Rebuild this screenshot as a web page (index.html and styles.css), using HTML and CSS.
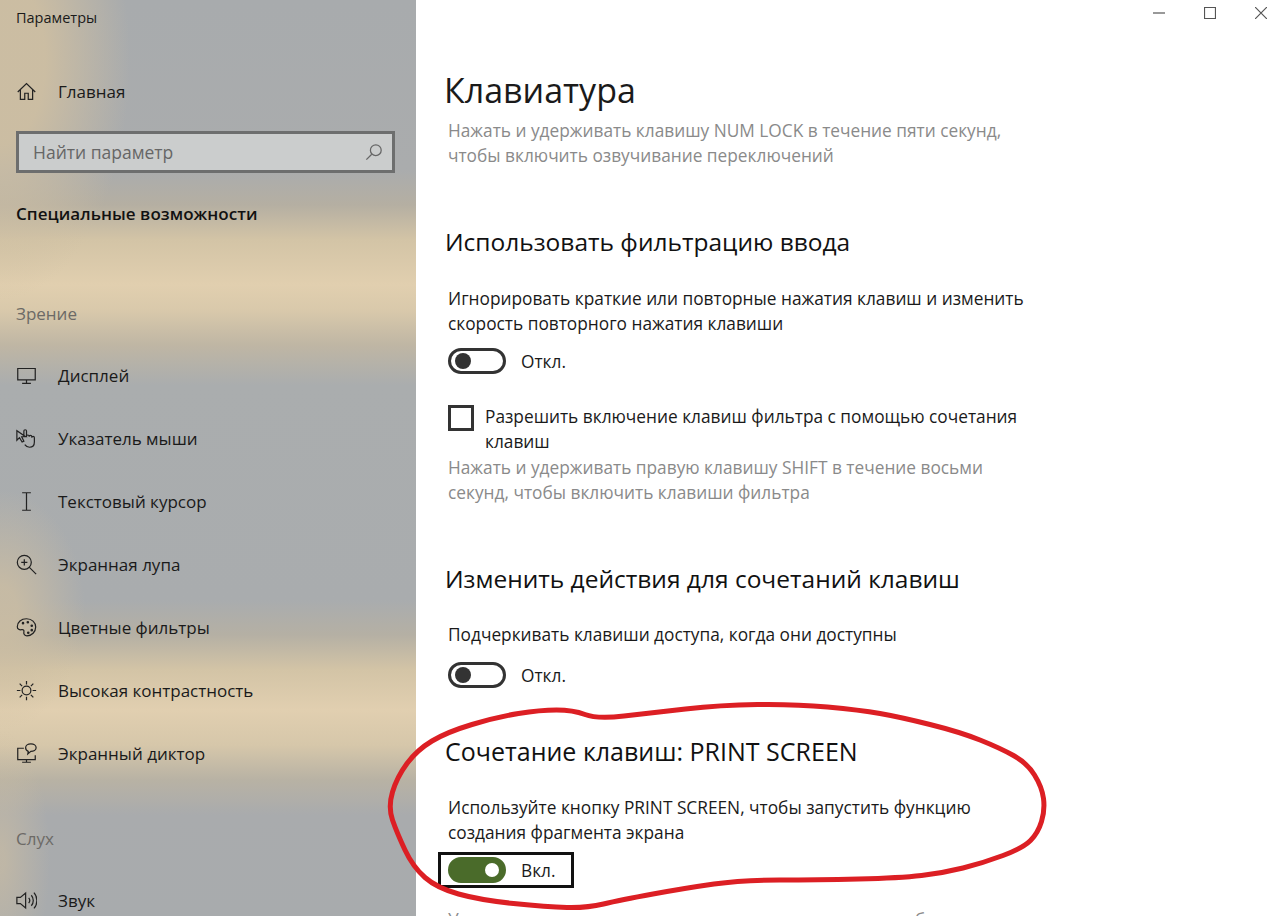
FILE: index.html
```html
<!DOCTYPE html>
<html lang="ru">
<head>
  <meta charset="UTF-8" />
  <title>Параметры</title>
  <link rel="stylesheet" href="styles.css">
</head>
<body>
  <div class="window">
    <aside class="sidebar">
      <div class="app-title">Параметры</div>
      <a class="nav-item home">
        <svg class="nav-icon" viewBox="0 0 24 24"><path d="M2 12.500 12 3l10 9.500M5 10v11h5v-7h4v7h5V10"/></svg>
        <span>Главная</span>
      </a>
      <div class="search">
        <span>Найти параметр</span>
        <svg class="search-icon" viewBox="0 0 20 20"><circle cx="12" cy="8" r="6"/><path d="M7.500 12.500 1.500 18.500"/></svg>
      </div>
      <div class="sidebar-heading">Специальные возможности</div>

      <div class="group-label first">Зрение</div>
      <a class="nav-item">
        <svg class="nav-icon" viewBox="0 0 24 24"><path d="M2 4h20v13H2zM12 17v4M7 21h10"/></svg>
        <span>Дисплей</span>
      </a>
      <a class="nav-item">
        <svg class="nav-icon" viewBox="0 0 24 24"><path d="M1 3v11l3-3 3 5 2-1-2.500-5H11zM9 10V3.500a1.500 1.500 0 0 1 3 0V10M12 9.500a1.500 1.500 0 0 1 3 0M15 10a1.500 1.500 0 0 1 3 0M18 11a1.500 1.500 0 0 1 3 0v5c0 4-2.500 6-5.500 6-2.500 0-4-1-5.500-3"/></svg>
        <span>Указатель мыши</span>
      </a>
      <a class="nav-item">
        <svg class="nav-icon" viewBox="0 0 24 24"><path d="M7 2h10M12 2v20M7 22h10"/></svg>
        <span>Текстовый курсор</span>
      </a>
      <a class="nav-item">
        <svg class="nav-icon" viewBox="0 0 24 24"><circle cx="9.500" cy="9.500" r="8"/><path d="M15 15l8 8M9.500 6v7M6 9.500h7"/></svg>
        <span>Экранная лупа</span>
      </a>
      <a class="nav-item">
        <svg class="nav-icon" viewBox="0 0 24 24"><path d="M12 2C6 2 1.500 6 1.500 11c0 3 2.500 4 5 3.500 2-.4 3 .8 2.500 2.500-.6 2.500 1 4.500 3.500 4.500 5.500 0 10-4.500 10-10S18 2 12 2z"/><circle cx="8" cy="7" r=".8"/><circle cx="13.500" cy="6" r=".8"/><circle cx="18" cy="10" r=".8"/><circle cx="18" cy="15" r=".8"/><circle cx="14" cy="18" r=".8"/></svg>
        <span>Цветные фильтры</span>
      </a>
      <a class="nav-item">
        <svg class="nav-icon" viewBox="0 0 24 24"><circle cx="12" cy="12" r="5"/><path d="M12 1v4M12 19v4M1 12h4M19 12h4M4.200 4.200 7 7M17 17l2.800 2.800M4.200 19.800 7 17M17 7l2.800-2.800"/></svg>
        <span>Высокая контрастность</span>
      </a>
      <a class="nav-item">
        <svg class="nav-icon" viewBox="0 0 24 24"><path d="M9 6H2v13h20v-5M12 19v3M7 22h10"/><path d="M17 1c-3.500 0-6 2-6 4.500S12.500 9 14 9.500l-.5 3 3.500-3c3 0 6-1.500 6-4S20.500 1 17 1z"/></svg>
        <span>Экранный диктор</span>
      </a>

      <div class="group-label">Слух</div>
      <a class="nav-item">
        <svg class="nav-icon" viewBox="0 0 24 24"><path d="M1 8.500v7h4l6 5V3.500l-6 5zM14.500 9c1.500 1.800 1.500 4.200 0 6M17.500 6c3 3.500 3 8.500 0 12M20.500 3c4.500 5 4.500 13 0 18"/></svg>
        <span>Звук</span>
      </a>
    </aside>

    <main class="content">
      <div class="window-controls">
        <svg viewBox="0 0 12 12"><path d="M0 6h12"/></svg>
        <svg viewBox="0 0 12 12"><path d="M.5.500h11v11H.5z"/></svg>
        <svg viewBox="0 0 12 12"><path d="M0 0l12 12M12 0 0 12"/></svg>
      </div>

      <h1>Клавиатура</h1>
      <p class="muted intro">Нажать и удерживать клавишу NUM LOCK в течение пяти секунд,<br>чтобы включить озвучивание переключений</p>

      <h2 class="filter-title">Использовать фильтрацию ввода</h2>
      <p>Игнорировать краткие или повторные нажатия клавиш и изменить<br>скорость повторного нажатия клавиши</p>
      <div class="toggle-row">
        <span class="toggle"></span>
        <span>Откл.</span>
      </div>
      <div class="check-row">
        <span class="checkbox"></span>
        <span>Разрешить включение клавиш фильтра с помощью сочетания<br>клавиш</span>
      </div>
      <p class="muted check-hint">Нажать и удерживать правую клавишу SHIFT в течение восьми<br>секунд, чтобы включить клавиши фильтра</p>

      <h2 class="shortcut-title">Изменить действия для сочетаний клавиш</h2>
      <p>Подчеркивать клавиши доступа, когда они доступны</p>
      <div class="toggle-row access">
        <span class="toggle"></span>
        <span>Откл.</span>
      </div>

      <h2 class="print-title">Сочетание клавиш: PRINT SCREEN</h2>
      <p>Используйте кнопку PRINT SCREEN, чтобы запустить функцию<br>создания фрагмента экрана</p>
      <div class="toggle-row focused">
        <span class="toggle on"></span>
        <span>Вкл.</span>
      </div>
      <p class="muted tail">Учтите, что на применение этих настроек может потребоваться время</p>
    </main>

    <!-- red marker scribble over the screenshot -->
    <svg class="scribble" viewBox="0 0 1280 916">
      <path d="M585 714.500Q573 710 556.500 710Q540 710 518.500 713.500Q497 717 472 724.500Q447 732 432 741Q417 750 407 763.500Q397 777 392.500 792Q388 807 392.500 820Q397 833 405 850Q413 867 425 877.500Q437 888 458.500 894Q480 900 513.500 903.500Q547 907 567 907.500Q587 908 603.500 904Q620 900 653 894Q686 888 714 884Q742 880 779.500 880Q817 880 858.500 879Q900 878 921.500 875.500Q943 873 963 868Q983 863 1003 855.500Q1023 848 1030.500 840.500Q1038 833 1041.500 821.500Q1045 810 1043.500 798.500Q1042 787 1034.500 775Q1027 763 1013.500 755.500Q1000 748 980 740Q960 732 930 724.500Q900 717 880 713.500Q860 710 827.500 707Q795 704 757.500 704.500Q720 705 685.500 709Q651 713 624 716Q597 719 585 714.500"/>
    </svg>
  </div>
</body>
</html>
```

FILE: styles.css
```css
html, body {
  margin: 0;
  padding: 0;
  height: 100%;
  overflow: hidden;
}
body {
  font-family: "Open Sans", "Noto Sans", sans-serif;
  color: #1a1a1a;
  background: #fff;
}
.window {
  position: relative;
  display: flex;
  height: 916px;
  overflow: hidden;
}

/* sidebar: blurred wallpaper look */
.sidebar {
  width: 416px;
  flex: none;
  box-sizing: border-box;
  padding: 8px 0 0 16px;
  font-size: 17px;
  background:
    radial-gradient(ellipse 130px 240px at 0 60px, rgba(205,190,162,.95) 35%, rgba(205,190,162,0) 100%),
    radial-gradient(ellipse 85px 120px at 0 610px, rgba(205,190,162,.8) 20%, rgba(205,190,162,0) 100%),
    radial-gradient(ellipse 50px 130px at 0 860px, rgba(205,190,162,.6) 10%, rgba(205,190,162,0) 100%),
    linear-gradient(180deg,
      #a8abad 0, #aaacad 170px, #b5afa2 205px, #d3c4a6 240px, #e1cfaf 285px, #d9c9ab 310px, #bfb6a4 345px,
      #aaadae 385px, #a9acae 600px, #b5b0a4 635px, #d3c4a6 670px, #e1cfb0 710px, #d6c7aa 745px, #b8b2a4 780px,
      #a9abad 815px, #a8abad 916px);
}
.app-title {
  font-size: 14.500px;
  line-height: 20px;
}
.nav-item {
  display: flex;
  align-items: center;
  gap: 21px;
  height: 63px;
}
.nav-icon {
  width: 21px;
  height: 21px;
  flex: none;
  fill: none;
  stroke: #222;
  stroke-width: 1.400;
}
.home {
  margin-top: 32px;
}
.search {
  display: flex;
  align-items: center;
  justify-content: space-between;
  box-sizing: border-box;
  width: 379px;
  height: 42px;
  margin-top: 8px;
  padding: 0 9px 0 14px;
  border: 3px solid #6d6e6e;
  background: #cbcdcd;
  color: #666;
  font-size: 17.500px;
}
.search-icon {
  width: 18px;
  height: 18px;
  fill: none;
  stroke: #666;
  stroke-width: 1.400;
}
.sidebar-heading {
  margin-top: 29px;
  font-weight: 600;
  letter-spacing: .05px;
  line-height: 24px;
  color: #111;
}
.group-label {
  margin-top: 42px;
  margin-bottom: 18px;
  line-height: 24px;
  color: #6c6a66;
}
.group-label.first {
  margin-top: 76px;
}

/* right pane */
.content {
  flex: 1;
  position: relative;
  padding: 65px 0 0 32px;
  font-size: 17.300px;
  line-height: 25px;
}
.window-controls {
  position: absolute;
  top: 7px;
  right: 13px;
  display: flex;
  gap: 39px;
}
.window-controls svg {
  width: 12px;
  height: 12px;
  fill: none;
  stroke: #555;
  stroke-width: 1.200;
}
h1 {
  margin: 0 0 0 -4px;
  font-size: 34px;
  line-height: 50px;
  font-weight: 400;
}
h2 {
  margin: 0 0 0 -3px;
  font-size: 24.500px;
  line-height: 34px;
  font-weight: 400;
  color: #111;
}
p {
  margin: 0;
}
.muted {
  color: #8a8a8a;
}
.intro {
  margin-top: 3px;
}
.filter-title {
  margin-top: 57px;
  margin-bottom: 27px;
}
.shortcut-title {
  margin-top: 57px;
  margin-bottom: 26px;
}
.print-title {
  margin-top: 46px;
  margin-bottom: 27px;
  font-size: 25px;
}
.toggle-row {
  display: flex;
  align-items: center;
  gap: 15px;
  height: 26px;
  margin-top: 12px;
}
.toggle-row.access {
  margin-top: 15px;
}
.toggle {
  box-sizing: border-box;
  position: relative;
  width: 58px;
  height: 26px;
  border: 3px solid #333;
  border-radius: 13px;
}
.toggle::after {
  content: "";
  position: absolute;
  left: 4px;
  top: 2px;
  width: 16px;
  height: 16px;
  border-radius: 50%;
  background: #333;
}
.toggle.on {
  border-color: #4a6b2a;
  background: #4a6b2a;
}
.toggle.on::after {
  left: auto;
  right: 4px;
  top: 3px;
  width: 14px;
  height: 14px;
  background: #fff;
}
.toggle-row.focused {
  width: 136px;
  box-sizing: border-box;
  height: 36px;
  margin: 7px 0 0 -10px;
  padding-left: 7px;
  border: 3px solid #111;
}
.check-row {
  display: flex;
  gap: 11px;
  margin-top: 30px;
}
.check-hint {
  margin-top: 1px;
}
.checkbox {
  box-sizing: border-box;
  width: 26px;
  height: 26px;
  margin-top: 1px;
  flex: none;
  border: 3px solid #333;
}
.tail {
  margin-top: 19px;
  white-space: nowrap;
}

.scribble {
  position: absolute;
  left: 0;
  top: 0;
  width: 1280px;
  height: 916px;
  pointer-events: none;
}
.scribble path {
  fill: none;
  stroke: #dc1f24;
  stroke-width: 5;
  stroke-linecap: round;
}
```
